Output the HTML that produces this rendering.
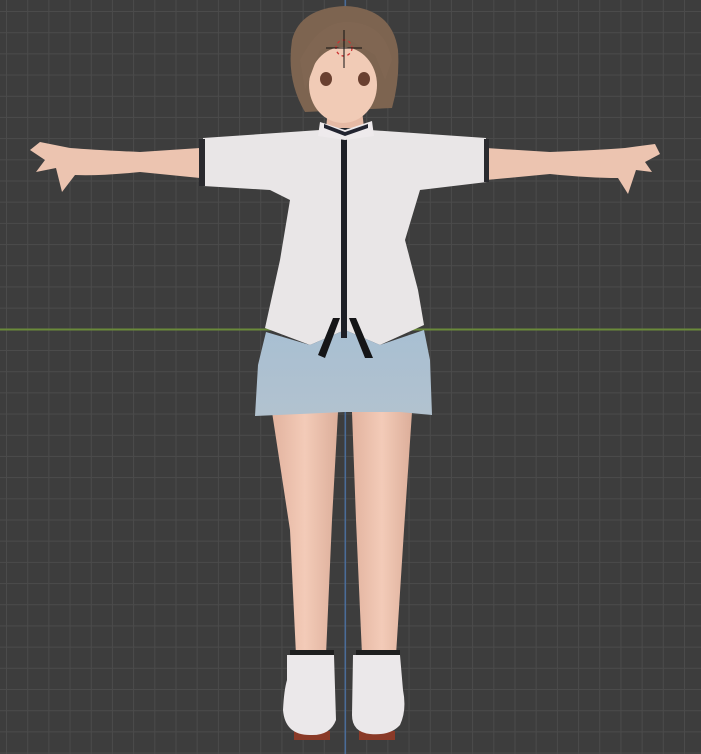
<!DOCTYPE html>
<html><head><style>
html,body{margin:0;padding:0;background:#3d3d3d;}
#bg{position:absolute;left:0;top:0;width:701px;height:754px;background-color:#3d3d3d;
background-image:linear-gradient(to right,#4b4b4b 1px,transparent 1px),linear-gradient(to bottom,#4b4b4b 1px,transparent 1px);
background-size:21.2px 21.2px;background-position:6px 11px;}
svg{display:block;position:absolute;left:0;top:0}
</style></head><body>
<div id="bg"></div>
<svg width="701" height="754" viewBox="0 0 701 754" xmlns="http://www.w3.org/2000/svg">
<defs>
<linearGradient id="skin" x1="0" x2="1"><stop offset="0" stop-color="#e2b39f"/><stop offset="0.5" stop-color="#f3cbb8"/><stop offset="1" stop-color="#dcae9a"/></linearGradient>
<linearGradient id="denim" x1="0" y1="0" x2="0" y2="1"><stop offset="0" stop-color="#a8bfd2"/><stop offset="1" stop-color="#b2c2cf"/></linearGradient>
</defs>
<rect x="0" y="328.5" width="701" height="2" fill="#6a8a3a"/>
<rect x="344.5" y="0" width="1.6" height="754" fill="#4a6c98"/>
<path d="M272 412 L338 412 L332 520 L326 655 L296 655 L290 530 Z" fill="url(#skin)"/>
<path d="M352 412 L412 412 L404 530 L396 655 L362 655 L356 520 Z" fill="url(#skin)"/>
<path d="M294 731 L330 731 L330 740 L294 740Z" fill="#8a3a28"/>
<path d="M359 731 L395 731 L395 740 L359 740Z" fill="#8a3a28"/>
<rect x="290" y="650" width="44" height="6" fill="#1e1e1e"/>
<rect x="356" y="650" width="44" height="6" fill="#1e1e1e"/>
<path d="M287 655 L334 655 L336 720 Q330 736 310 735 Q285 735 283 710 Q284 690 287 680 Z" fill="#ebe8ea"/>
<path d="M353 655 L400 655 L403 690 Q407 710 400 725 Q390 736 370 734 Q352 732 352 715 Z" fill="#ebe8ea"/>
<path d="M200 148 L140 152 Q95 150 70 148 L40 142 L30 150 L45 160 L36 172 L56 168 L62 192 L75 175 Q100 176 140 172 L200 178 Z" fill="#ecc4b0"/>
<path d="M486 148 L550 152 Q600 150 625 148 L655 144 L660 154 L645 162 L652 172 L636 170 L628 194 L618 178 Q590 178 550 174 L486 180 Z" fill="#ecc4b0"/>
<path d="M203 138 L320 130 L370 130 L486 138 L487 182 L420 190 L405 240 L418 290 L424 325 L380 345 L345 330 L310 345 L265 328 L280 260 L290 200 L270 190 L203 186 Z" fill="#e9e6e7"/>
<rect x="199" y="139" width="6" height="47" fill="#2a2a2e"/>
<rect x="484" y="139" width="5" height="43" fill="#2a2a2e"/>
<path d="M266 332 L310 345 L345 330 L380 345 L424 330 L430 360 L432 415 L400 412 L345 412 L300 414 L255 416 L258 365 Z" fill="url(#denim)"/>
<path d="M318 355 L333 318 L340 318 L325 358 Z M373 358 L356 318 L349 318 L365 358 Z" fill="#151517"/>
<rect x="341" y="128" width="6" height="210" fill="#1d1f26"/>
<path d="M328 110 L362 110 L364 128 L326 128 Z" fill="#e6baa5"/>
<path d="M320 122 L345 130 L372 121 L374 136 L345 140 L318 136 Z" fill="#eeeaec"/>
<path d="M324 124 L345 132 L368 124 L368 128 L345 136 L324 128 Z" fill="#222430"/>
<path d="M292 40 Q300 8 345 6 Q392 8 398 50 Q400 80 392 108 L305 112 Q286 80 292 40 Z" fill="#7d6450"/>
<ellipse cx="343" cy="85" rx="34" ry="38" fill="#f1cbb6"/>
<path d="M300 60 Q320 20 350 22 Q385 24 392 60 L385 80 L375 55 L350 40 L320 50 L305 90 Z" fill="#806652"/>
<ellipse cx="326" cy="79" rx="6" ry="7" fill="#6a4030"/>
<ellipse cx="364" cy="79" rx="6" ry="7" fill="#6a4030"/>
<circle cx="344" cy="48" r="8" fill="none" stroke="#c33" stroke-width="1.3" stroke-dasharray="3 3"/>
<path d="M326 48 H362 M344 30 V68" stroke="#111" stroke-width="1"/>
</svg>
</body></html>
